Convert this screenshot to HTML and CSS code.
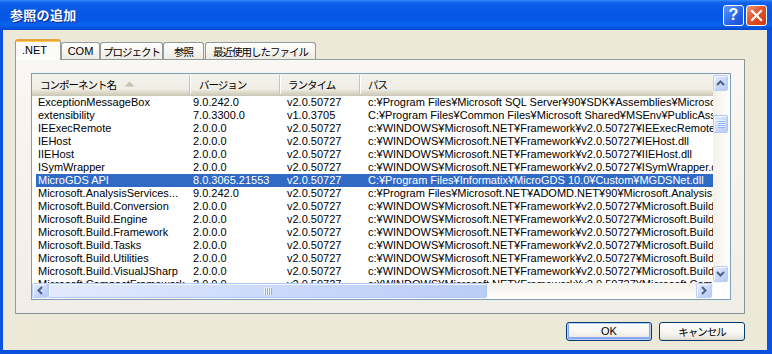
FILE: index.html
```html
<!DOCTYPE html>
<html lang="ja">
<head>
<meta charset="utf-8">
<title>参照の追加</title>
<link rel="stylesheet" href="styles.css">
</head>
<body>
<div class="window">
  <div class="titlebar">
    <span class="title">参照の追加</span>
    <div class="caption-buttons">
      <div class="cbtn help">?</div>
      <div class="cbtn close">
        <svg width="13" height="13" viewBox="0 0 13 13"><path d="M2 2 L11 11 M11 2 L2 11" stroke="#fff" stroke-width="2.2" stroke-linecap="square"/></svg>
      </div>
    </div>
  </div>
  <div class="frame">
    <div class="tabs">
      <div class="tabstrip">
        <div class="tab active t-net">.NET</div>
        <div class="tab t-com">COM</div>
        <div class="tab t-proj"><span class="ja">プロジェクト</span></div>
        <div class="tab t-ref"><span class="ja">参照</span></div>
        <div class="tab t-recent"><span class="ja">最近使用したファイル</span></div>
      </div>
      <div class="panel">
        <div class="list">
          <div class="list-main">
            <div class="lv-header">
              <div class="h h1"><span class="ja">コンポーネント名</span><svg class="sort" width="11" height="6" viewBox="0 0 11 6"><path d="M0.5 5.5 L5.5 0.5 L10.5 5.5 Z" fill="#C5C2B2"/></svg></div>
              <div class="h h2"><span class="ja">バージョン</span></div>
              <div class="h h3"><span class="ja">ランタイム</span></div>
              <div class="h h4"><span class="ja">パス</span></div>
            </div>
            <div class="rows">
              <div class="row"><span class="c1">ExceptionMessageBox</span><span class="c2">9.0.242.0</span><span class="c3">v2.0.50727</span><span class="c4">c:¥Program Files¥Microsoft SQL Server¥90¥SDK¥Assemblies¥Microsoft.ExceptionMessageBox.dll</span></div>
              <div class="row"><span class="c1">extensibility</span><span class="c2">7.0.3300.0</span><span class="c3">v1.0.3705</span><span class="c4">C:¥Program Files¥Common Files¥Microsoft Shared¥MSEnv¥PublicAssemblies¥extensibility.dll</span></div>
              <div class="row"><span class="c1">IEExecRemote</span><span class="c2">2.0.0.0</span><span class="c3">v2.0.50727</span><span class="c4">c:¥WINDOWS¥Microsoft.NET¥Framework¥v2.0.50727¥IEExecRemote.dll</span></div>
              <div class="row"><span class="c1">IEHost</span><span class="c2">2.0.0.0</span><span class="c3">v2.0.50727</span><span class="c4">c:¥WINDOWS¥Microsoft.NET¥Framework¥v2.0.50727¥IEHost.dll</span></div>
              <div class="row"><span class="c1">IIEHost</span><span class="c2">2.0.0.0</span><span class="c3">v2.0.50727</span><span class="c4">c:¥WINDOWS¥Microsoft.NET¥Framework¥v2.0.50727¥IIEHost.dll</span></div>
              <div class="row"><span class="c1">ISymWrapper</span><span class="c2">2.0.0.0</span><span class="c3">v2.0.50727</span><span class="c4">c:¥WINDOWS¥Microsoft.NET¥Framework¥v2.0.50727¥ISymWrapper.dll</span></div>
              <div class="row sel"><span class="c1">MicroGDS API</span><span class="c2">8.0.3065.21553</span><span class="c3">v2.0.50727</span><span class="c4">C:¥Program Files¥Informatix¥MicroGDS 10.0¥Custom¥MGDSNet.dll</span></div>
              <div class="row"><span class="c1">Microsoft.AnalysisServices...</span><span class="c2">9.0.242.0</span><span class="c3">v2.0.50727</span><span class="c4">c:¥Program Files¥Microsoft.NET¥ADOMD.NET¥90¥Microsoft.AnalysisServices.AdomdClient.dll</span></div>
              <div class="row"><span class="c1">Microsoft.Build.Conversion</span><span class="c2">2.0.0.0</span><span class="c3">v2.0.50727</span><span class="c4">c:¥WINDOWS¥Microsoft.NET¥Framework¥v2.0.50727¥Microsoft.Build.Conversion.dll</span></div>
              <div class="row"><span class="c1">Microsoft.Build.Engine</span><span class="c2">2.0.0.0</span><span class="c3">v2.0.50727</span><span class="c4">c:¥WINDOWS¥Microsoft.NET¥Framework¥v2.0.50727¥Microsoft.Build.Engine.dll</span></div>
              <div class="row"><span class="c1">Microsoft.Build.Framework</span><span class="c2">2.0.0.0</span><span class="c3">v2.0.50727</span><span class="c4">c:¥WINDOWS¥Microsoft.NET¥Framework¥v2.0.50727¥Microsoft.Build.Framework.dll</span></div>
              <div class="row"><span class="c1">Microsoft.Build.Tasks</span><span class="c2">2.0.0.0</span><span class="c3">v2.0.50727</span><span class="c4">c:¥WINDOWS¥Microsoft.NET¥Framework¥v2.0.50727¥Microsoft.Build.Tasks.dll</span></div>
              <div class="row"><span class="c1">Microsoft.Build.Utilities</span><span class="c2">2.0.0.0</span><span class="c3">v2.0.50727</span><span class="c4">c:¥WINDOWS¥Microsoft.NET¥Framework¥v2.0.50727¥Microsoft.Build.Utilities.dll</span></div>
              <div class="row"><span class="c1">Microsoft.Build.VisualJSharp</span><span class="c2">2.0.0.0</span><span class="c3">v2.0.50727</span><span class="c4">c:¥WINDOWS¥Microsoft.NET¥Framework¥v2.0.50727¥Microsoft.Build.VisualJSharp.dll</span></div>
              <div class="row"><span class="c1">Microsoft.CompactFramework...</span><span class="c2">2.0.0.0</span><span class="c3">v2.0.50727</span><span class="c4">c:¥WINDOWS¥Microsoft.NET¥Framework¥v2.0.50727¥Microsoft.CompactFramework.Build.Tasks.dll</span></div>
            </div>
          </div>
          <div class="vscroll">
            <div class="sb-btn"><svg width="9" height="6" viewBox="0 0 9 6"><polyline points="1,5 4.5,1.5 8,5" fill="none" stroke="#4D6185" stroke-width="2"/></svg></div>
            <div class="sb-thumb v-thumb">
              <svg width="8" height="8" viewBox="0 0 8 8"><path d="M0 0.5H8M0 2.5H8M0 4.5H8M0 6.5H8" stroke="#EEF4FE" stroke-width="1"/><path d="M1 1.5H8M1 3.5H8M1 5.5H8M1 7.5H8" stroke="#8CB0F8" stroke-width="1"/></svg>
            </div>
            <div class="sb-fill"></div>
            <div class="sb-btn"><svg width="9" height="6" viewBox="0 0 9 6"><polyline points="1,1 4.5,4.5 8,1" fill="none" stroke="#4D6185" stroke-width="2"/></svg></div>
          </div>
          <div class="hscroll">
            <div class="sb-btn"><svg width="6" height="9" viewBox="0 0 6 9"><polyline points="5,1 1.5,4.5 5,8" fill="none" stroke="#4D6185" stroke-width="2"/></svg></div>
            <div class="sb-thumb h-thumb">
              <svg width="8" height="8" viewBox="0 0 8 8"><path d="M0.5 0V8M2.5 0V8M4.5 0V8M6.5 0V8" stroke="#EEF4FE" stroke-width="1"/><path d="M1.5 1V8M3.5 1V8M5.5 1V8M7.5 1V8" stroke="#8CB0F8" stroke-width="1"/></svg>
            </div>
            <div class="sb-fill"></div>
            <div class="sb-btn"><svg width="6" height="9" viewBox="0 0 6 9"><polyline points="1,1 4.5,4.5 1,8" fill="none" stroke="#4D6185" stroke-width="2"/></svg></div>
          </div>
          <div class="corner"></div>
        </div>
      </div>
    </div>
    <div class="buttons">
      <button class="btn default">OK</button>
      <button class="btn"><span class="ja">キャンセル</span></button>
    </div>
  </div>
</div>
</body>
</html>
```
FILE: styles.css
```css
* { box-sizing: border-box; }
html, body { margin: 0; padding: 0; }
body {
  width: 772px;
  height: 354px;
  overflow: hidden;
  background: #ECE9D8;
  font-family: "Liberation Sans", "Noto Sans CJK JP", sans-serif;
  font-size: 11px;
  color: #000;
}
.ja {
  font-family: "Noto Sans CJK JP", sans-serif;
  font-size: 10.5px;
  letter-spacing: -1px;
  line-height: 13px;
}
.window {
  width: 772px;
  height: 354px;
  display: flex;
  flex-direction: column;
}
.titlebar {
  height: 30px;
  flex: none;
  display: flex;
  align-items: center;
  justify-content: space-between;
  padding: 0 5px 0 10px;
  background: linear-gradient(#3D8AF7 0, #1467EE 2px, #0A5DE8 5px, #0757E4 12px, #0658E6 20px, #0A63EE 25px, #075AE4 27px, #0447CC 30px);
}
.title {
  color: #fff;
  font-family: "Noto Sans CJK JP", sans-serif;
  font-weight: bold;
  font-size: 13px;
  letter-spacing: 0.3px;
  text-shadow: 1px 1px 0 #0B2A8A;
  line-height: 16px;
}
.caption-buttons { display: flex; gap: 2px; }
.cbtn {
  width: 21px;
  height: 21px;
  border: 1px solid #fff;
  border-radius: 3px;
  display: flex;
  align-items: center;
  justify-content: center;
}
.help {
  background: linear-gradient(135deg, #5F9BFA, #2563E8 60%, #1A4FD6);
  color: #fff;
  font-family: "Liberation Sans", sans-serif;
  font-weight: bold;
  font-size: 16px;
  line-height: 1;
}
.close {
  background: linear-gradient(135deg, #F09A80, #E2532B 45%, #CC3A13);
}
.frame {
  flex: 1;
  display: flex;
  flex-direction: column;
  border-left: 3px solid #0A52E2;
  border-right: 5px solid #0A52E2;
  border-bottom: 4px solid #0A4FDD;
  padding: 9px 0 0 12px;
  background: #ECE9D8;
}
.tabs { width: 730px; }
.tabstrip {
  display: flex;
  align-items: flex-end;
  height: 20px;
}
.tab {
  height: 17px;
  border: 1px solid #919B9C;
  border-bottom: none;
  border-radius: 3px 3px 0 0;
  background: linear-gradient(#FFFFFF, #F6F5F1 50%, #ECEBE4);
  display: flex;
  align-items: center;
  justify-content: center;
  font-size: 11px;
  line-height: 13px;
  white-space: nowrap;
}
.t-net { width: 46px; }
.t-com { width: 39px; }
.t-proj { width: 63px; }
.t-ref { width: 41px; }
.t-recent { width: 111px; margin-left: 1px; }
.tab.active {
  height: 21px;
  margin-bottom: -1px;
  position: relative;
  z-index: 1;
  background: #FBFBF9;
  border-top: 2px solid #E9A23C;
  box-shadow: inset 0 1px 0 #FFCB4F;
  justify-content: flex-start;
  padding-left: 6px;
}
.panel {
  height: 255px;
  border: 1px solid #919B9C;
  border-right-color: #8A9393;
  border-bottom-color: #8A9393;
  background: linear-gradient(#F8F7F3, #F0EEE6);
  padding: 13px 0 0 15px;
}
.list {
  width: 700px;
  height: 227px;
  border: 1px solid #7F9DB9;
  background: #fff;
  display: grid;
  grid-template-columns: 681px 17px;
  grid-template-rows: 209px 16px;
}
.list-main { overflow: hidden; }
.lv-header {
  height: 22px;
  display: flex;
  background: linear-gradient(#F4F3EC, #EFEDE4 70%, #E2DECD 80%, #D6D2C2 90%, #CBC7B8);
}
.h {
  height: 19px;
  margin-top: 1px;
  display: flex;
  align-items: center;
  padding-left: 8px;
  white-space: nowrap;
  border-right: 1px solid #C7C5B2;
  box-shadow: 1px 0 0 #FFFFFF;
}
.h1 { width: 158px; }
.h2 { width: 90px; padding-left: 9px; }
.h3 { width: 80px; }
.h4 { flex: 1; border-right: none; box-shadow: none; }
.sort { margin-left: 8px; margin-top: -1px; }
.rows { padding-left: 4px; }
.row {
  width: 677px;
  height: 13px;
  line-height: 13px;
  display: flex;
  white-space: nowrap;
  overflow: hidden;
}
.row.sel { background: #316AC5; color: #fff; }
.row span { flex: none; overflow: hidden; }
.c1 { width: 154px; padding-left: 2px; }
.c2 { width: 90px; padding-left: 3px; }
.c3 { width: 80px; padding-left: 7px; }
.c4 { padding-left: 8px; }
.vscroll {
  display: flex;
  flex-direction: column;
  background: linear-gradient(to right, #F3F1EB, #FEFEFB);
  padding: 1px 1px 1px 0;
}
.hscroll {
  display: flex;
  background: linear-gradient(#F3F1EB, #FEFEFB);
  padding: 0 1px 1px 0;
}
.corner { background: #FFFFFF; }
.sb-btn {
  flex: none;
  width: 16px;
  height: 16px;
  border: 1px solid #BACDF5;
  border-radius: 2px;
  background: linear-gradient(135deg, #E6EEFE, #C6D6FA 60%, #B7CAF5);
  box-shadow: inset 1px 1px 0 #F4F8FF;
  display: flex;
  align-items: center;
  justify-content: center;
}
.vscroll .sb-btn { width: 15px; height: 16px; }
.hscroll .sb-btn { width: 16px; height: 15px; }
.sb-thumb {
  flex: none;
  border: 1px solid #B2C6F2;
  border-radius: 2px;
  background: linear-gradient(135deg, #E3ECFE, #C9D8FB 55%, #BACDF6);
  box-shadow: inset 1px 1px 0 #F4F8FF;
  display: flex;
  align-items: center;
  justify-content: center;
}
.v-thumb { width: 15px; height: 18px; margin-top: 24px; }
.h-thumb { width: 439px; height: 15px; }
.sb-fill { flex: 1; }
.buttons {
  display: flex;
  justify-content: flex-end;
  gap: 7px;
  margin-top: 8px;
  margin-right: 22px;
}
.btn {
  width: 86px;
  height: 19px;
  padding: 0;
  border: 1px solid #003C74;
  border-radius: 3px;
  background: linear-gradient(#FFFFFF, #F5F4EF 60%, #E9E7DE 88%, #D6D0C5);
  font-family: "Liberation Sans", "Noto Sans CJK JP", sans-serif;
  font-size: 11px;
  line-height: 13px;
  color: #000;
}
.btn.default {
  box-shadow: inset 0 0 0 1px #B9D1FA, inset 0 -1px 0 2px #8AA9EE;
}
```
